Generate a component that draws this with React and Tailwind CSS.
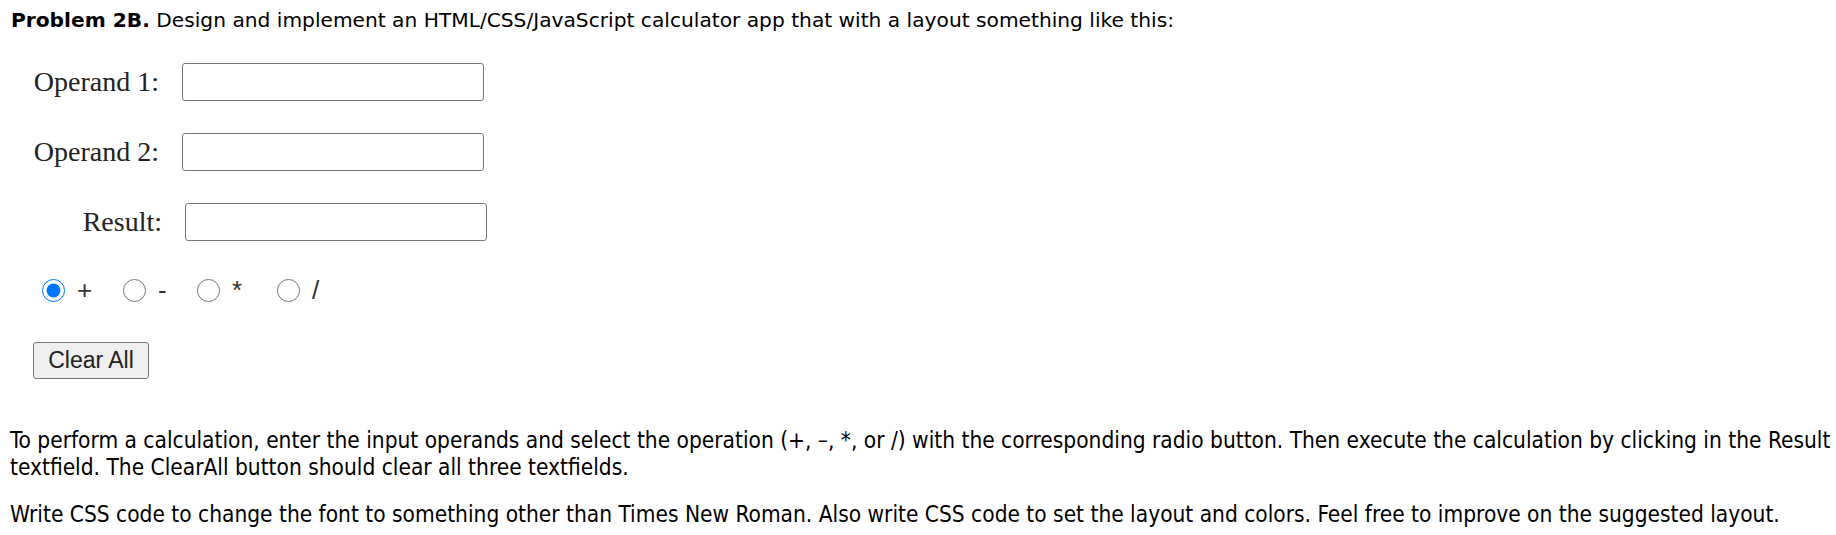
import { useState } from 'react';

const Row = ({ label, value, onChange, shift = false }) => (
  <div className={`flex items-center gap-[23px] ${shift ? 'ml-[3px]' : ''}`}>
    <label className="w-[126px] text-right text-[28px] leading-none text-[#222] font-['Liberation_Serif',serif]">
      {label}
    </label>
    <input
      type="text"
      value={value}
      onChange={onChange}
      className="w-[302px] h-[38px] bg-white border border-[#767676] rounded-[3px] px-2 text-[20px] outline-none"
    />
  </div>
);

const ops = [
  { sign: '+', width: 'w-[16px]' },
  { sign: '-', width: 'w-[9px]' },
  { sign: '*', width: 'w-[15px]' },
  { sign: '/', width: 'w-[8px]' },
];

export default function App() {
  const [a, setA] = useState('');
  const [b, setB] = useState('');
  const [result, setResult] = useState('');
  const [op, setOp] = useState('+');

  const calculate = () => {
    const x = parseFloat(a);
    const y = parseFloat(b);
    if (isNaN(x) || isNaN(y)) return;
    if (op === '+') setResult(String(x + y));
    if (op === '-') setResult(String(x - y));
    if (op === '*') setResult(String(x * y));
    if (op === '/') setResult(String(x / y));
  };

  return (
    <div className="min-h-screen bg-white text-black font-['DejaVu_Sans',Verdana,sans-serif]">
      <p className="pt-2 pl-[11px] text-[20.2px] leading-6 whitespace-nowrap">
        <span className="font-bold">Problem 2B.</span> Design and implement an HTML/CSS/JavaScript
        calculator app that with a layout something like this:
      </p>

      <div className="mt-[31px] pl-[33px] flex flex-col gap-[32px]">
        <Row label="Operand 1:" value={a} onChange={(e) => setA(e.target.value)} />
        <Row label="Operand 2:" value={b} onChange={(e) => setB(e.target.value)} />
        <div onClick={calculate}>
          <Row label="Result:" value={result} onChange={(e) => setResult(e.target.value)} shift />
        </div>
      </div>

      <div className="mt-[36px] pl-[42px] flex items-center gap-[30px] font-['Liberation_Sans',Arial,sans-serif] text-[26px] text-[#333]">
        {ops.map((o) => (
          <label key={o.sign} className="flex items-center gap-[12px] leading-none">
            <input
              type="radio"
              name="op"
              checked={op === o.sign}
              onChange={() => setOp(o.sign)}
              className="m-0 w-[23px] h-[23px] accent-[#0075ff]"
            />
            <span className={o.width}>{o.sign}</span>
          </label>
        ))}
      </div>

      <div className="mt-[39px] pl-[33px]">
        <button
          onClick={() => {
            setA('');
            setB('');
            setResult('');
          }}
          className="w-[116px] h-[37px] bg-[#efefef] border border-[#767676] rounded-[3px] text-[23px] leading-none text-[#222] font-['Liberation_Sans',Arial,sans-serif]"
        >
          Clear All
        </button>
      </div>

      <div className="mt-[48px] pl-[10px] font-['DejaVu_Sans_Condensed','DejaVu_Sans',sans-serif] text-[22.5px] leading-[27px] whitespace-nowrap">
        <p>
          To perform a calculation, enter the input operands and select the operation (+, –, *, or /)
          with the corresponding radio button. Then execute the calculation by clicking in the Result
          <br />
          textfield. The ClearAll button should clear all three textfields.
        </p>
        <p className="mt-[20px]">
          Write CSS code to change the font to something other than Times New Roman. Also write CSS
          code to set the layout and colors. Feel free to improve on the suggested layout.
        </p>
      </div>
    </div>
  );
}
